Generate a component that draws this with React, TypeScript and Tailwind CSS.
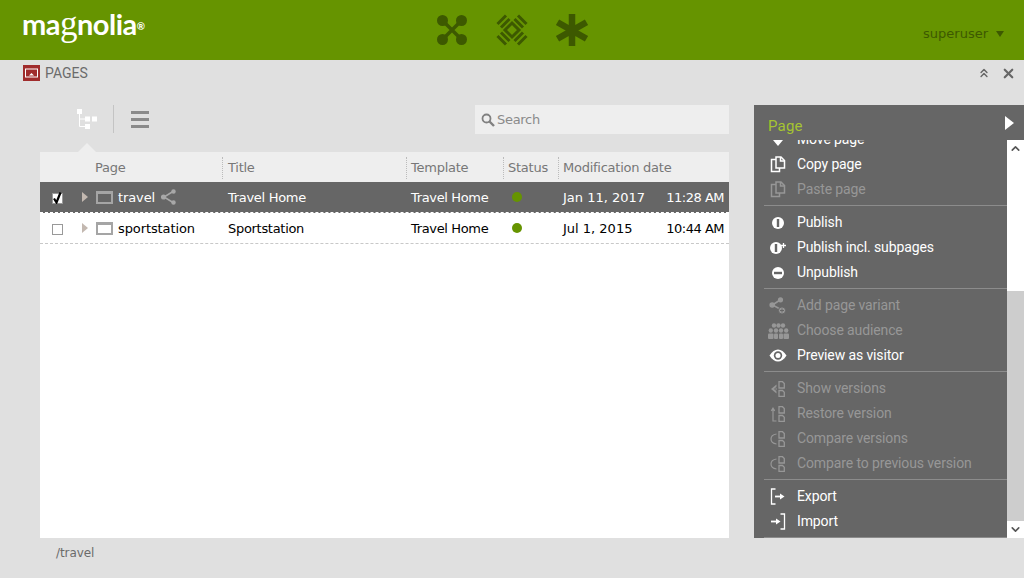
import React from 'react';
import { ChevronUp, ChevronDown, ChevronsUp, X } from 'lucide-react';

const TABLE_FONT = "font-['DejaVu_Sans',Verdana,sans-serif]";

const CopyIcon = ({ color }: { color: string }) => (
    <svg width="16" height="17" viewBox="0 0 16 17" fill="none" stroke={color} strokeWidth="1.5">
        <path d="M6 3.500H1.500V15.500H9.500V12" />
        <path d="M6 1h5l3.500 3.500V12H6z" fill={color === '#fff' ? '#666' : 'none'} />
        <path d="M10.500 1v4h4" />
    </svg>
);

const VersionDocs = ({ color }: { color: string }) => (
    <g fill="none" stroke={color} strokeWidth="1.3">
        <path d="M9 .7h3.500L14.300 2.500V7H9z" />
        <path d="M9 9.500h3.500l1.800 1.800v4.200H9z" />
    </g>
);

const OFF = '#979797';

const icons: Record<string, React.ReactNode> = {
    move: (
        <svg width="16" height="16" viewBox="0 0 16 16" fill="#fff">
            <path d="M6 2h4v6h3l-5 6-5-6h3z" />
        </svg>
    ),
    copy: <CopyIcon color="#fff" />,
    paste: <CopyIcon color={OFF} />,
    publish: (
        <svg width="16" height="16" viewBox="0 0 16 16">
            <circle cx="8" cy="8" r="6" fill="#fff" />
            <rect x="6.800" y="4" width="2.400" height="8" fill="#666" />
        </svg>
    ),
    publishAll: (
        <svg width="18" height="16" viewBox="0 0 18 16">
            <circle cx="7" cy="8" r="6" fill="#fff" />
            <rect x="5.800" y="4" width="2.400" height="8" fill="#666" />
            <path d="M14.500 3v5M12 5.500h5" stroke="#fff" strokeWidth="1.300" />
        </svg>
    ),
    unpublish: (
        <svg width="16" height="16" viewBox="0 0 16 16">
            <circle cx="8" cy="8" r="6" fill="#fff" />
            <rect x="4" y="6.800" width="8" height="2.400" fill="#666" />
        </svg>
    ),
    variant: (
        <svg width="18" height="18" viewBox="0 0 18 18" fill="none" stroke={OFF} strokeWidth="1.600">
            <path d="M11 3 3.500 8l7.500 4" />
            <circle cx="11.500" cy="2.800" r="1.800" fill={OFF} />
            <circle cx="3.200" cy="8" r="2" fill={OFF} />
            <circle cx="13" cy="13.500" r="3.600" fill={OFF} stroke="#666" strokeWidth="1" />
            <path d="M13 11.500v4M11 13.500h4" stroke="#666" strokeWidth="1" />
        </svg>
    ),
    audience: (
        <svg width="21" height="16" viewBox="0 0 21 16" fill={OFF}>
            <circle cx="10.500" cy="2.500" r="2.200" />
            <circle cx="6" cy="2.500" r="2.200" />
            <circle cx="15" cy="2.500" r="2.200" />
            <circle cx="2.800" cy="7.500" r="2.200" />
            <circle cx="8" cy="7.500" r="2.200" />
            <circle cx="13" cy="7.500" r="2.200" />
            <circle cx="18.200" cy="7.500" r="2.200" />
            <rect x="0" y="10.500" width="5.500" height="5.500" rx="1" />
            <rect x="6" y="10.500" width="4" height="5.500" rx="1" />
            <rect x="11" y="10.500" width="4" height="5.500" rx="1" />
            <rect x="15.500" y="10.500" width="5.500" height="5.500" rx="1" />
        </svg>
    ),
    preview: (
        <svg width="18" height="13" viewBox="0 0 18 13">
            <path d="M0.500 6.500C3 2.500 6 .5 9 .5S15 2.500 17.500 6.500C15 10.500 12 12.500 9 12.500S3 10.500 .5 6.500z" fill="#fff" />
            <circle cx="9" cy="6.500" r="4.200" fill="#666" />
            <circle cx="9" cy="6.500" r="2.500" fill="#fff" />
        </svg>
    ),
    show: (
        <svg width="16" height="16" viewBox="0 0 16 16">
            <path d="M6.500 3.500 1 8l5.500 4.500z" fill={OFF} />
            <path d="M8 5 4.500 8 8 11" fill="none" stroke="#666" strokeWidth="1" />
            <VersionDocs color={OFF} />
        </svg>
    ),
    restore: (
        <svg width="16" height="16" viewBox="0 0 16 16" fill="none">
            <path d="M3 3v12h3.500M1.300 4.800 3 2.200l1.700 2.600" stroke={OFF} strokeWidth="1.200" />
            <VersionDocs color={OFF} />
        </svg>
    ),
    compare: (
        <svg width="16" height="16" viewBox="0 0 16 16" fill="none">
            <path d="M6.500 3C3.200 3.500 1 5.500 1 8s2.200 4.500 5.500 5" stroke={OFF} strokeWidth="1.200" />
            <VersionDocs color={OFF} />
        </svg>
    ),
    exportItem: (
        <svg width="16" height="17" viewBox="0 0 16 17" fill="none" stroke="#fff" strokeWidth="1.300">
            <path d="M5.500 1H1.500v15h4" />
            <path d="M5 8.500h6" strokeWidth="1.800" />
            <path d="M10 5.500 14.500 8.500 10 11.500z" fill="#fff" stroke="none" />
        </svg>
    ),
    importItem: (
        <svg width="16" height="17" viewBox="0 0 16 17" fill="none" stroke="#fff" strokeWidth="1.300">
            <path d="M10.500 1h4v15h-4" />
            <path d="M1 8.500h6" strokeWidth="1.800" />
            <path d="M6 5.500 10.500 8.500 6 11.500z" fill="#fff" stroke="none" />
        </svg>
    ),
};

type Action = { icon: string; label: string; off?: boolean };

const groups: Action[][] = [
    [
        { icon: 'move', label: 'Move page' },
        { icon: 'copy', label: 'Copy page' },
        { icon: 'paste', label: 'Paste page', off: true },
    ],
    [
        { icon: 'publish', label: 'Publish' },
        { icon: 'publishAll', label: 'Publish incl. subpages' },
        { icon: 'unpublish', label: 'Unpublish' },
    ],
    [
        { icon: 'variant', label: 'Add page variant', off: true },
        { icon: 'audience', label: 'Choose audience', off: true },
        { icon: 'preview', label: 'Preview as visitor' },
    ],
    [
        { icon: 'show', label: 'Show versions', off: true },
        { icon: 'restore', label: 'Restore version', off: true },
        { icon: 'compare', label: 'Compare versions', off: true },
        { icon: 'compare', label: 'Compare to previous version', off: true },
    ],
    [
        { icon: 'exportItem', label: 'Export' },
        { icon: 'importItem', label: 'Import' },
    ],
];

type Row = {
    name: string;
    title: string;
    date: string;
    time: string;
    selected?: boolean;
};

const rows: Row[] = [
    { name: 'travel', title: 'Travel Home', date: 'Jan 11, 2017', time: '11:28 AM', selected: true },
    { name: 'sportstation', title: 'Sportstation', date: 'Jul 1, 2015', time: '10:44 AM' },
];

const App: React.FC = () => {
    return (
        <div className="flex h-[578px] w-[1024px] flex-col overflow-hidden bg-[#e0e0e0]">
            {/* Top bar */}
            <div className="flex h-[60px] shrink-0 items-center bg-[#669400] pr-[20px]">
                <div className="w-[435px] pb-[14px] pl-[22px] font-['Lato',sans-serif] text-[29px] leading-none font-bold tracking-[-0.5px] whitespace-nowrap text-white">
                    ma<span className="font-['Liberation_Serif',serif] text-[35px] leading-none font-normal">g</span>nolia<sup className="text-[10px]">®</sup>
                </div>
                <div className="flex items-center gap-[26px]">
                    <svg width="34" height="34" viewBox="0 0 34 34" fill="#3d5900">
                        <path d="M9 9l16 16M25 9 9 25" stroke="#3d5900" strokeWidth="3.500" />
                        <circle cx="7.500" cy="7.500" r="5.500" />
                        <circle cx="26.500" cy="7.500" r="5.500" />
                        <circle cx="7.500" cy="26.500" r="5.500" />
                        <circle cx="26.500" cy="26.500" r="5.500" />
                    </svg>
                    <svg width="34" height="34" viewBox="0 0 34 34" fill="none" stroke="#3d5900" strokeWidth="3">
                        <path d="M17 10 24 17 17 24 10 17z" />
                        <path d="M11 2.500 2.500 11M14.500 6 6 14.500M23 2.500 31.500 11M19.500 6 28 14.500M11 31.500 2.500 23M14.500 28 6 19.500M23 31.500 31.500 23M19.500 28 28 19.500" />
                    </svg>
                    <svg width="34" height="34" viewBox="0 0 34 34" fill="none" stroke="#3d5900" strokeWidth="6.500">
                        <path d="M17 1v32M2.500 9.200l29 16.600M31.500 9.200l-29 16.600" />
                    </svg>
                </div>
                <div className="ml-auto flex items-center gap-[8px] pt-[8px] font-['DejaVu_Sans',sans-serif] text-[13px] text-[#3d5900]">
                    superuser
                    <span className="h-0 w-0 border-x-[4.500px] border-t-[6px] border-x-transparent border-t-[#3d5900]" />
                </div>
            </div>

            {/* App title */}
            <div className="flex h-[26px] shrink-0 items-center pr-[8px] pl-[23px]">
                <svg width="17" height="16" viewBox="0 0 17 16">
                    <rect width="17" height="16" fill="#a02c2c" />
                    <rect x="2.500" y="4" width="12" height="8" fill="#a02c2c" stroke="#fff" strokeWidth="1" />
                    <path d="M6 10.500 8.500 8 11 10.500z" fill="#fff" />
                </svg>
                <span className="ml-[5px] pt-px font-['Roboto',sans-serif] text-[14px] text-[#6b6b6b]">PAGES</span>
                <ChevronsUp className="mr-[-1px] ml-auto" size={14} color="#666" strokeWidth={2.500} />
                <X className="ml-[11px]" size={15} color="#666" strokeWidth={3.500} />
            </div>

            {/* Workbench */}
            <div className="flex flex-1 items-start pt-[19px] pl-[40px]">
                <div className="w-[689px]">
                    <div className="flex h-[47px] items-start justify-between">
                        <div className="flex h-[28px] items-center pl-[37px]">
                            <svg width="21" height="20" viewBox="0 0 21 20" fill="#fff">
                                <path d="M2.500 4v13.500H8M2.500 10H8" fill="none" stroke="#fff" strokeWidth="1" />
                                <rect x="0" y="0" width="5" height="5" />
                                <rect x="8" y="7.500" width="5" height="5" />
                                <rect x="15" y="7.500" width="5" height="5" />
                                <rect x="8" y="15" width="5" height="5" />
                            </svg>
                            <span className="mr-[17px] ml-[15px] h-[28px] w-px bg-[#c4c4c4]" />
                            <span className="flex w-[18px] flex-col gap-[4px]">
                                <span className="h-[3px] bg-[#8a8a8a]" />
                                <span className="h-[3px] bg-[#8a8a8a]" />
                                <span className="h-[3px] bg-[#8a8a8a]" />
                            </span>
                        </div>
                        <div className={`flex h-[29px] w-[254px] items-center gap-[2px] bg-[#eeeeee] pl-[6px] text-[13px] tracking-[-0.3px] text-[#8a8a8a] ${TABLE_FONT}`}>
                            <svg width="14" height="14" viewBox="0 0 14 14" fill="none" stroke="#808080">
                                <circle cx="5.500" cy="5.500" r="4" strokeWidth="1.800" />
                                <path d="M8.500 8.500 13 13" strokeWidth="2.400" />
                            </svg>
                            Search
                        </div>
                    </div>

                    <div className={`relative flex h-[386px] flex-col bg-white text-[13px] ${TABLE_FONT}`}>
                        <span className="absolute -top-[9px] left-[38px] h-0 w-0 border-x-[9px] border-b-[9px] border-x-transparent border-b-[#eeeeee]" />
                        <div className="grid h-[30px] shrink-0 grid-cols-[182px_184px_97px_55px_171px] items-center bg-[#eeeeee] pt-[2px] tracking-[-0.25px] text-[#777777]">
                            <div className="pl-[55px]">Page</div>
                            <div className="flex h-[22px] items-center border-l border-dotted border-[#bbbbbb] pl-[5px]">Title</div>
                            <div className="flex h-[22px] items-center border-l border-dotted border-[#bbbbbb] pl-[4px]">Template</div>
                            <div className="flex h-[22px] items-center border-l border-dotted border-[#bbbbbb] pl-[4px]">Status</div>
                            <div className="flex h-[22px] items-center border-l border-dotted border-[#bbbbbb] pl-[4px] whitespace-nowrap">Modification date</div>
                        </div>
                        {rows.map(row => (
                            <div
                                key={row.name}
                                className={`grid h-[31px] shrink-0 grid-cols-[182px_184px_97px_55px_171px] items-center border-b border-dashed ${row.selected ? 'border-white bg-[#666666] text-white' : 'border-[#c8c8c8] bg-white text-black'}`}
                            >
                                <div className="flex items-center pl-[12px]">
                                    <span className="mt-[2px] flex h-[11px] w-[11px] items-center justify-center border border-[#999999] bg-white">
                                        {row.selected && (
                                            <svg className="shrink-0" width="11" height="12" viewBox="0 0 11 12" fill="none" stroke="#000" strokeWidth="2.200">
                                                <path d="M2 6.500 4.500 10.500 8.500 .5" />
                                            </svg>
                                        )}
                                    </span>
                                    <span className="ml-[19px] h-0 w-0 border-y-[5px] border-l-[6px] border-y-transparent border-l-[#c3b8b0]" />
                                    <span className="ml-[8px] h-[13px] w-[17px] border-2 border-t-[3px] border-[#a5a5a5]" />
                                    <span className="ml-[5px] pt-[2px] tracking-[-0.1px]">{row.name}</span>
                                    {row.selected && (
                                        <svg className="ml-[6px]" width="15" height="16" viewBox="0 0 15 16" fill="none" stroke="#a8a8a8" strokeWidth="1.500">
                                            <path d="M12 2.500 3 8l9 5.500" />
                                            <circle cx="12.500" cy="2.500" r="1.500" fill="#a8a8a8" />
                                            <circle cx="2.500" cy="8" r="1.800" fill="#a8a8a8" />
                                            <circle cx="12.500" cy="13.500" r="1.500" fill="#a8a8a8" />
                                        </svg>
                                    )}
                                </div>
                                <div className="pt-[2px] pl-[6px] tracking-[-0.3px]">{row.title}</div>
                                <div className="pt-[2px] pl-[5px] tracking-[-0.35px]">Travel Home</div>
                                <div className="pl-[9px]">
                                    <span className="block h-[10px] w-[10px] rounded-full bg-[#669400]" />
                                </div>
                                <div className="flex justify-between pt-[2px] pr-[5px] pl-[5px] whitespace-nowrap">
                                    <span>{row.date}</span>
                                    <span className="tracking-[-0.5px]">{row.time}</span>
                                </div>
                            </div>
                        ))}
                    </div>

                    <div className={`pt-[6px] pl-[16px] text-[12px] tracking-[-0.1px] text-[#6b6b6b] ${TABLE_FONT}`}>/travel</div>
                </div>

                {/* Action bar */}
                <div className="ml-[25px] flex h-[433px] w-[270px] flex-col font-['Roboto',sans-serif]">
                    <div className="flex h-[35px] shrink-0 items-center justify-between bg-[#666666] pt-[7px] pr-[10px] pl-[14px]">
                        <span className="text-[15px] tracking-[0.2px] text-[#a5c431]">Page</span>
                        <span className="mb-[7px] h-0 w-0 border-y-[7px] border-l-[9px] border-y-transparent border-l-white" />
                    </div>
                    <div className="flex min-h-0 flex-1">
                        <div className="h-full w-[253px] overflow-hidden bg-[#666666] pl-[10px]">
                            <div className="-mt-[13px]">
                                {groups.map((group, i) => (
                                    <div key={i} className={i < groups.length - 1 ? 'mb-[4px] border-b border-[#8c8c8c] pb-[3px]' : 'border-b border-[#8c8c8c] pb-[3px]'}>
                                        {group.map(item => (
                                            <div
                                                key={item.label}
                                                className={`flex h-[25px] items-center text-[14px] tracking-[-0.12px] whitespace-nowrap ${item.off ? 'text-[#979797]' : 'text-white'}`}
                                            >
                                                <span className="flex w-[33px] shrink-0 items-center justify-center pr-[5px]">{icons[item.icon]}</span>
                                                {item.label}
                                            </div>
                                        ))}
                                    </div>
                                ))}
                            </div>
                        </div>
                        <div className="flex w-[17px] flex-col bg-white">
                            <ChevronUp className="h-[17px] w-[17px] p-[2px]" color="#555" strokeWidth={3} />
                            <div className="mt-[134px] h-[231px] bg-[#cdcdcd]" />
                            <ChevronDown className="mt-auto h-[17px] w-[17px] p-[2px]" color="#555" strokeWidth={3} />
                        </div>
                    </div>
                </div>
            </div>
        </div>
    );
};

export default App;
